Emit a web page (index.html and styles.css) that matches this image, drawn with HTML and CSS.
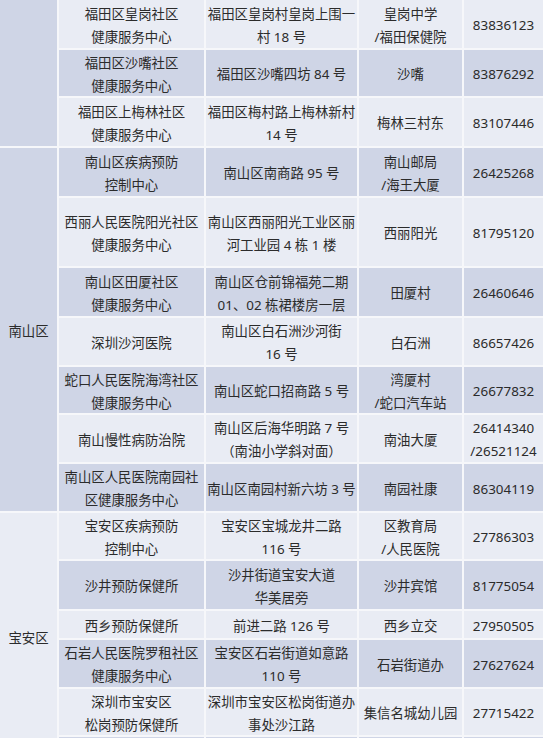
FILE: index.html
```html
<!DOCTYPE html>
<html lang="zh-CN">
<head>
<meta charset="utf-8">
<title>预防保健机构</title>
<link rel="stylesheet" href="styles.css">
</head>
<body>
<div class="table">
  <div class="cell blue district d-futian"></div>
  <div class="cell light">福田区皇岗社区<br>健康服务中心</div>
  <div class="cell light">福田区皇岗村皇岗上围一<br>村 18 号</div>
  <div class="cell light">皇岗中学<br>/福田保健院</div>
  <div class="cell light">83836123</div>

  <div class="cell blue">福田区沙嘴社区<br>健康服务中心</div>
  <div class="cell blue">福田区沙嘴四坊 84 号</div>
  <div class="cell blue">沙嘴</div>
  <div class="cell blue">83876292</div>

  <div class="cell light">福田区上梅林社区<br>健康服务中心</div>
  <div class="cell light">福田区梅村路上梅林新村<br>14 号</div>
  <div class="cell light">梅林三村东</div>
  <div class="cell light">83107446</div>

  <div class="cell blue district d-nanshan">南山区</div>
  <div class="cell blue">南山区疾病预防<br>控制中心</div>
  <div class="cell blue">南山区南商路 95 号</div>
  <div class="cell blue">南山邮局<br>/海王大厦</div>
  <div class="cell blue">26425268</div>

  <div class="cell light">西丽人民医院阳光社区<br>健康服务中心</div>
  <div class="cell light">南山区西丽阳光工业区丽<br>河工业园 4 栋 1 楼</div>
  <div class="cell light">西丽阳光</div>
  <div class="cell light">81795120</div>

  <div class="cell blue">南山区田厦社区<br>健康服务中心</div>
  <div class="cell blue">南山区仓前锦福苑二期<br>01、02 栋裙楼房一层</div>
  <div class="cell blue">田厦村</div>
  <div class="cell blue">26460646</div>

  <div class="cell light">深圳沙河医院</div>
  <div class="cell light">南山区白石洲沙河街<br>16 号</div>
  <div class="cell light">白石洲</div>
  <div class="cell light">86657426</div>

  <div class="cell blue">蛇口人民医院海湾社区<br>健康服务中心</div>
  <div class="cell blue">南山区蛇口招商路 5 号</div>
  <div class="cell blue">湾厦村<br>/蛇口汽车站</div>
  <div class="cell blue">26677832</div>

  <div class="cell light">南山慢性病防治院</div>
  <div class="cell light">南山区后海华明路 7 号<br>（南油小学斜对面）</div>
  <div class="cell light">南油大厦</div>
  <div class="cell light">26414340<br>/26521124</div>

  <div class="cell blue">南山区人民医院南园社<br>区健康服务中心</div>
  <div class="cell blue">南山区南园村新六坊 3 号</div>
  <div class="cell blue">南园社康</div>
  <div class="cell blue">86304119</div>

  <div class="cell light district d-baoan">宝安区</div>
  <div class="cell light">宝安区疾病预防<br>控制中心</div>
  <div class="cell light">宝安区宝城龙井二路<br>116 号</div>
  <div class="cell light">区教育局<br>/人民医院</div>
  <div class="cell light">27786303</div>

  <div class="cell blue">沙井预防保健所</div>
  <div class="cell blue">沙井街道宝安大道<br>华美居旁</div>
  <div class="cell blue">沙井宾馆</div>
  <div class="cell blue">81775054</div>

  <div class="cell light">西乡预防保健所</div>
  <div class="cell light">前进二路 126 号</div>
  <div class="cell light">西乡立交</div>
  <div class="cell light">27950505</div>

  <div class="cell blue">石岩人民医院罗租社区<br>健康服务中心</div>
  <div class="cell blue">宝安区石岩街道如意路<br>110 号</div>
  <div class="cell blue">石岩街道办</div>
  <div class="cell blue">27627624</div>

  <div class="cell light">深圳市宝安区<br>松岗预防保健所</div>
  <div class="cell light">深圳市宝安区松岗街道办<br>事处沙江路</div>
  <div class="cell light">集信名城幼儿园</div>
  <div class="cell light">27715422</div>

  <div class="cell blue"></div>
  <div class="cell blue"></div>
  <div class="cell blue"></div>
  <div class="cell blue"></div>
</div>
</body>
</html>
```

FILE: styles.css
```css
html, body {
  margin: 0;
  padding: 0;
  background: #f6f7fa;
  overflow: hidden;
}

body {
  width: 543px;
  height: 738px;
  font-family: "Noto Sans", "Noto Sans CJK SC", sans-serif;
  font-size: 13.4px;
  color: #2b2b2b;
}

.table {
  display: grid;
  grid-template-columns: 57px 145px 151px 103px 79px;
  grid-template-rows: 48px 46px 48px 48px 68px 48px 47px 46px 47px 47px 46px 48px 27px 47px 46px 24px;
  gap: 2px;
  background: #f6f7fa;
}

.cell {
  display: flex;
  align-items: center;
  justify-content: center;
  text-align: center;
  line-height: 23px;
  white-space: nowrap;
  padding-top: 3px;
  box-sizing: border-box;
}

.light {
  background: #e9ecf4;
}

.blue {
  background: #cfd5e6;
}

.district {
  grid-column: 1;
}

.d-futian {
  grid-row: 1 / span 3;
}

.d-nanshan {
  grid-row: 4 / span 7;
}

.d-baoan {
  grid-row: 11 / span 6;
}
```
